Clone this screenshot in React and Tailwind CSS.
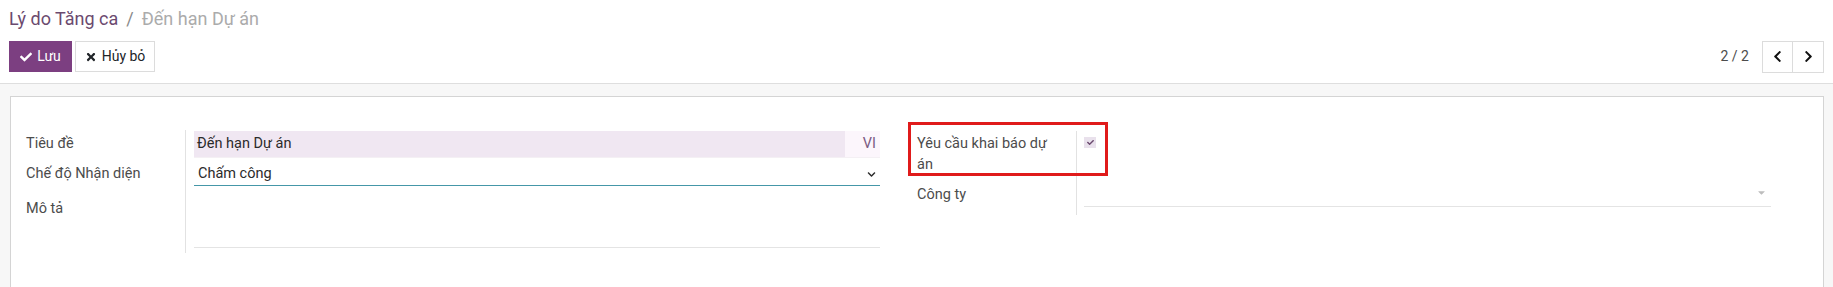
import { FaCheck, FaTimes, FaChevronLeft, FaChevronRight, FaChevronDown, FaCaretDown } from "react-icons/fa";

const App = () => {
    return (
        <div className="w-[1833px] h-[287px] overflow-hidden bg-white font-['Roboto',sans-serif] text-[14px] text-[#4c4c4c]">

            {/* CONTROL PANEL */}
            <div className="px-[9px] border-b border-[#dedede]">

                <div className="h-[41px] pt-[7px] text-[18px] leading-[24px]">
                    <span className="text-[#6b4a6f]">Lý do Tăng ca</span>
                    <span className="text-[#8a8a8a] mx-[8px]">/</span>
                    <span className="text-[#ababab]">Đến hạn Dự án</span>
                </div>

                <div className="flex justify-between items-center h-[31px] mb-[11px]">

                    <div className="flex gap-[3px] h-full">
                        <button className="flex items-center gap-[5px] h-full w-[63px] justify-center bg-[#7c3f81] text-white">
                            <FaCheck className="text-[12px]" />
                            <span>Lưu</span>
                        </button>
                        <button className="flex items-center gap-[5px] h-full w-[80px] justify-center bg-white border border-[#dcdcdc] text-[#212529]">
                            <FaTimes className="text-[12px]" />
                            <span>Hủy bỏ</span>
                        </button>
                    </div>

                    <div className="flex items-center h-[32px]">
                        <span className="text-[14px] text-[#4c4c4c] mr-[13px]">2 / 2</span>
                        <div className="flex h-full border border-[#dcdcdc]">
                            <button className="w-[30px] flex items-center justify-center border-r border-[#dcdcdc] text-[#111]">
                                <FaChevronLeft className="text-[13px]" />
                            </button>
                            <button className="w-[30px] flex items-center justify-center text-[#111]">
                                <FaChevronRight className="text-[13px]" />
                            </button>
                        </div>
                    </div>

                </div>

            </div>

            {/* FORM AREA */}
            <div className="bg-[#f7f7f7] pt-[12px] pl-[10px] pr-[9px] h-[300px]">

                <div className="bg-white border border-[#d4d4d4] h-full pt-[34px] pl-[15px] flex text-[14.5px]">

                    {/* LEFT GROUP */}
                    <div className="flex w-[854px]">

                        <div className="w-[160px] border-r border-[#e2e2e2] h-[123px] -mt-[1px] pt-[1px]">
                            <div className="h-[27px] pt-[3px] leading-[20px]">Tiêu đề</div>
                            <div className="h-[28px] pt-[6px] leading-[20px]">Chế độ Nhận diện</div>
                            <div className="pt-[13px] leading-[20px]">Mô tả</div>
                        </div>

                        <div className="flex-1 pl-[8px]">

                            {/* TITLE */}
                            <div className="flex h-[27px] border-b border-[#f4f0f4]">
                                <div className="flex-1 bg-[#f0e7f2] pl-[3px] pt-[3px] leading-[20px] text-[#2b2b2b]">
                                    Đến hạn Dự án
                                </div>
                                <div className="w-[35px] bg-[#fcf6fc] pt-[3px] leading-[20px] text-right pr-[4px] text-[#7b5b83]">
                                    VI
                                </div>
                            </div>

                            {/* SELECT */}
                            <div className="flex justify-between items-center h-[28px] border-b border-[#4597a8] pl-[4px] pr-[4px] pt-[5px] text-[#2b2b2b]">
                                <span className="leading-[20px]">Chấm công</span>
                                <FaChevronDown className="text-[9px]" />
                            </div>

                            {/* DESCRIPTION */}
                            <div className="h-[62px] border-b border-[#e4e4e4]"></div>

                        </div>

                    </div>

                    {/* RIGHT GROUP */}
                    <div className="relative flex w-[854px] ml-[37px]">

                        {/* annotation box */}
                        <div className="absolute left-[-9px] top-[-9px] w-[200px] h-[54px] border-[3px] border-[#e01b1b]"></div>

                        <div className="w-[160px] border-r border-[#e2e2e2] h-[84px]">
                            <div className="pt-[2px] leading-[21px] w-[145px]">Yêu cầu khai báo dự án</div>
                            <div className="pt-[9px] leading-[21px]">Công ty</div>
                        </div>

                        <div className="flex-1 pl-[7px]">

                            <div className="h-[48px] pt-[6px]">
                                <div className="w-[12px] h-[11px] bg-[#e9e1ec] flex items-center justify-center text-[#6b4a6f]">
                                    <FaCheck className="text-[7px]" />
                                </div>
                            </div>

                            <div className="flex justify-end items-center h-[28px] border-b border-[#e4e4e4] pr-[4px]">
                                <FaCaretDown className="text-[11px] text-[#bdbdbd]" />
                            </div>

                        </div>

                    </div>

                </div>

            </div>

        </div>
    );
};

export default App;
